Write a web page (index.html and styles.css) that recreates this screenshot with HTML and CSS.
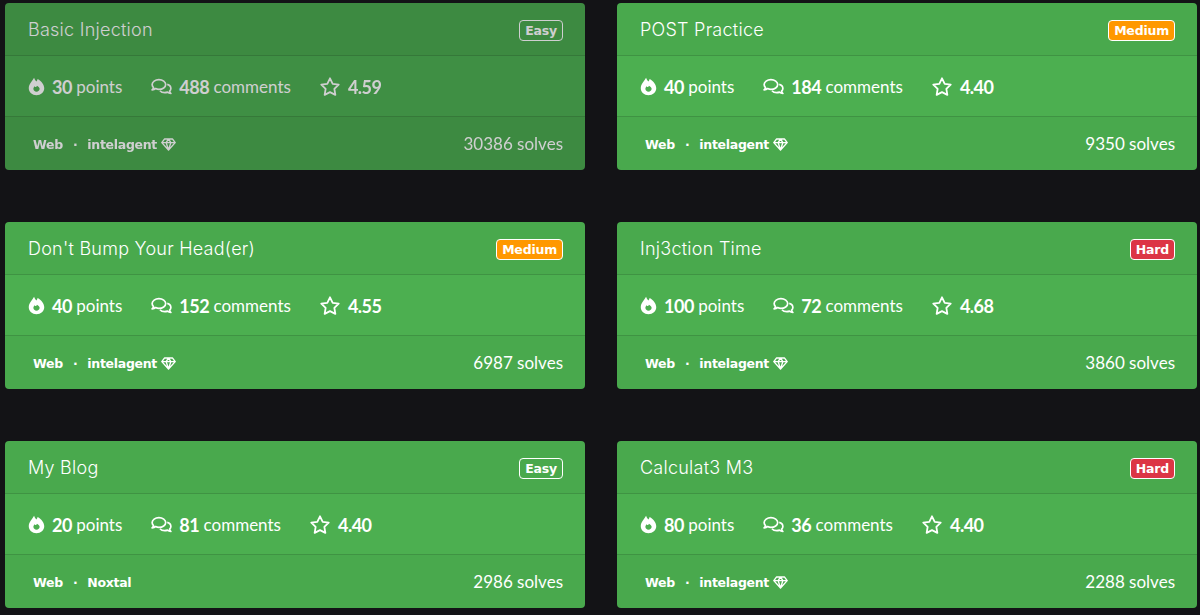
FILE: index.html
```html
<!DOCTYPE html>
<html lang="en">
<head>
    <meta charset="UTF-8">
    <title>Challenges</title>
    <link rel="stylesheet" href="styles.css">
</head>
<body>
    <svg class="icon-defs" width="0" height="0" aria-hidden="true">
        <symbol id="i-fire" viewBox="0 0 18 20">
            <path fill="currentColor" fill-rule="evenodd" d="M6.4.8c.5 1.700 1.300 3 2.400 3.900.6-.8 1.100-1.600 1.400-2.700 3.800 2 7 5.900 7 9.800 0 4.300-3.700 7.400-8.200 7.400S.8 16 .8 11.800C.8 7.600 4.500 4.700 6.400.8zM9.500 9.200c-.4 1-1 1.500-1.700 1.200-.3-.1-.5-.4-.6-.7-.9.700-1.500 1.700-1.500 2.800 0 1.800 1.500 3.100 3.300 3.100s3.300-1.300 3.300-3.100c0-1.300-1.100-2.500-2.800-3.300z"/>
        </symbol>
        <symbol id="i-comments" viewBox="0 0 22 18">
            <path fill="none" stroke="currentColor" stroke-width="1.800" stroke-linejoin="round" d="M8.300 1.300C4.400 1.300 1.200 3.600 1.200 6.500c0 1.200.5 2.300 1.400 3.200-.3.900-.8 1.600-1.400 2.200 1.400-.1 2.700-.5 3.700-1.300 1 .5 2.200.8 3.400.8 3.900 0 7.100-2.200 7.100-4.900s-3.200-5.200-7.100-5.200z"/>
            <path fill="none" stroke="currentColor" stroke-width="1.800" stroke-linejoin="round" d="M17 6.300c2.300.6 3.800 2.300 3.800 4.200 0 1.100-.5 2.100-1.300 2.900.2 1 .7 1.800 1.300 2.400-1.400-.1-2.600-.6-3.500-1.400-.9.300-1.900.5-2.900.5-2.100 0-3.900-.7-5-2"/>
        </symbol>
        <symbol id="i-star" viewBox="0 0 20 19">
            <path fill="none" stroke="currentColor" stroke-width="1.800" stroke-linejoin="round" d="M10 1.300l2.700 5.500 6 .9-4.350 4.200 1 6-5.350-2.800-5.350 2.800 1-6L1.300 7.700l6-.9z"/>
        </symbol>
        <symbol id="i-gem" viewBox="0 0 16 14">
            <path fill="none" stroke="currentColor" stroke-width="1.500" stroke-linejoin="round" d="M3.800 1h8.400l3 4-7.200 8L.8 5zM.8 5h14.400M5.500 5L8 13l2.500-8M5.500 5l2.500-4 2.500 4"/>
        </symbol>
    </svg>

    <div class="challenge-grid">
        <div class="card card-solved">
            <div class="card-header"><h3>Basic Injection</h3><span class="badge">Easy</span></div>
            <div class="card-body">
                <span class="stat"><svg class="icon fire"><use href="#i-fire"/></svg><b>30</b> points</span>
                <span class="stat"><svg class="icon comments"><use href="#i-comments"/></svg><b>488</b> comments</span>
                <span class="stat"><svg class="icon star"><use href="#i-star"/></svg><b>4.59</b></span>
            </div>
            <div class="card-footer"><span class="meta">Web<i>·</i>intelagent <svg class="gem"><use href="#i-gem"/></svg></span><span class="solves">30386 solves</span></div>
        </div>
        <div class="card">
            <div class="card-header"><h3>POST Practice</h3><span class="badge medium">Medium</span></div>
            <div class="card-body">
                <span class="stat"><svg class="icon fire"><use href="#i-fire"/></svg><b>40</b> points</span>
                <span class="stat"><svg class="icon comments"><use href="#i-comments"/></svg><b>184</b> comments</span>
                <span class="stat"><svg class="icon star"><use href="#i-star"/></svg><b>4.40</b></span>
            </div>
            <div class="card-footer"><span class="meta">Web<i>·</i>intelagent <svg class="gem"><use href="#i-gem"/></svg></span><span class="solves">9350 solves</span></div>
        </div>
        <div class="card">
            <div class="card-header"><h3>Don't Bump Your Head(er)</h3><span class="badge medium">Medium</span></div>
            <div class="card-body">
                <span class="stat"><svg class="icon fire"><use href="#i-fire"/></svg><b>40</b> points</span>
                <span class="stat"><svg class="icon comments"><use href="#i-comments"/></svg><b>152</b> comments</span>
                <span class="stat"><svg class="icon star"><use href="#i-star"/></svg><b>4.55</b></span>
            </div>
            <div class="card-footer"><span class="meta">Web<i>·</i>intelagent <svg class="gem"><use href="#i-gem"/></svg></span><span class="solves">6987 solves</span></div>
        </div>
        <div class="card">
            <div class="card-header"><h3>Inj3ction Time</h3><span class="badge hard">Hard</span></div>
            <div class="card-body">
                <span class="stat"><svg class="icon fire"><use href="#i-fire"/></svg><b>100</b> points</span>
                <span class="stat"><svg class="icon comments"><use href="#i-comments"/></svg><b>72</b> comments</span>
                <span class="stat"><svg class="icon star"><use href="#i-star"/></svg><b>4.68</b></span>
            </div>
            <div class="card-footer"><span class="meta">Web<i>·</i>intelagent <svg class="gem"><use href="#i-gem"/></svg></span><span class="solves">3860 solves</span></div>
        </div>
        <div class="card">
            <div class="card-header"><h3>My Blog</h3><span class="badge">Easy</span></div>
            <div class="card-body">
                <span class="stat"><svg class="icon fire"><use href="#i-fire"/></svg><b>20</b> points</span>
                <span class="stat"><svg class="icon comments"><use href="#i-comments"/></svg><b>81</b> comments</span>
                <span class="stat"><svg class="icon star"><use href="#i-star"/></svg><b>4.40</b></span>
            </div>
            <div class="card-footer"><span class="meta">Web<i>·</i>Noxtal</span><span class="solves">2986 solves</span></div>
        </div>
        <div class="card">
            <div class="card-header"><h3>Calculat3 M3</h3><span class="badge hard">Hard</span></div>
            <div class="card-body">
                <span class="stat"><svg class="icon fire"><use href="#i-fire"/></svg><b>80</b> points</span>
                <span class="stat"><svg class="icon comments"><use href="#i-comments"/></svg><b>36</b> comments</span>
                <span class="stat"><svg class="icon star"><use href="#i-star"/></svg><b>4.40</b></span>
            </div>
            <div class="card-footer"><span class="meta">Web<i>·</i>intelagent <svg class="gem"><use href="#i-gem"/></svg></span><span class="solves">2288 solves</span></div>
        </div>
    </div>
</body>
</html>
```

FILE: styles.css
```css
/* Colours */
:root {
    --page-bg: #131316;
    --card-green: #4caf50;
    --line: rgba(0, 0, 0, 0.125);
    --bar: rgba(0, 0, 0, 0.03);
    --white: #ffffff;
}

* {
    box-sizing: border-box;
    margin: 0;
    padding: 0;
}

body {
    background: var(--page-bg);
    color: var(--white);
    font-family: 'Lato', sans-serif;
    padding: 3px 3px 0 5px;
    overflow: hidden;
}

.icon-defs {
    display: block;
    height: 0;
}

.challenge-grid {
    display: grid;
    grid-template-columns: 580px 580px;
    column-gap: 32px;
    row-gap: 52px;
}

.card {
    background: var(--card-green);
    border-radius: 4px;
    height: 167px;
    display: flex;
    flex-direction: column;
}

/* already solved */
.card-solved {
    opacity: 0.8;
}

.card-header {
    height: 53px;
    padding: 0 22px 0 23px;
    background: var(--bar);
    border-bottom: 1px solid var(--line);
    display: flex;
    justify-content: space-between;
    align-items: center;
}

.card-header h3 {
    font-family: 'Inter', sans-serif;
    font-size: 18px;
    font-weight: 300;
    letter-spacing: 0.25px;
}

.badge {
    font-family: 'DejaVu Sans', sans-serif;
    font-size: 12.5px;
    font-weight: 700;
    letter-spacing: -0.2px;
    line-height: 19px;
    padding: 0 5px;
    margin-top: 3px;
    border: 1px solid var(--white);
    border-radius: 4px;
}

.badge.medium {
    background: #ff9800;
}

.badge.hard {
    background: #dc3545;
}

.card-body {
    height: 60px;
    padding: 1px 23px 0;
    display: flex;
    align-items: center;
    gap: 29px;
}

.stat {
    display: flex;
    align-items: center;
    font-size: 17px;
    white-space: pre;
}

.stat b {
    font-size: 18px;
    font-weight: 700;
    letter-spacing: -0.5px;
}

.icon {
    margin-right: 7px;
}

.fire {
    width: 17px;
    height: 19px;
}

.comments {
    width: 21px;
    height: 18px;
}

.star {
    width: 20px;
    height: 19px;
    margin-right: 8px;
}

.card-footer {
    flex: 1;
    padding: 0 22px 0 28px;
    background: var(--bar);
    border-top: 1px solid var(--line);
    display: flex;
    justify-content: space-between;
    align-items: center;
}

.meta {
    display: flex;
    align-items: center;
    padding-top: 1px;
    font-family: 'DejaVu Sans', sans-serif;
    font-size: 12.5px;
    font-weight: 700;
    letter-spacing: -0.3px;
    white-space: pre;
}

.meta i {
    font-style: normal;
    margin: 0 10px;
}

.gem {
    width: 15px;
    height: 13px;
}

.solves {
    font-size: 17px;
}
```
